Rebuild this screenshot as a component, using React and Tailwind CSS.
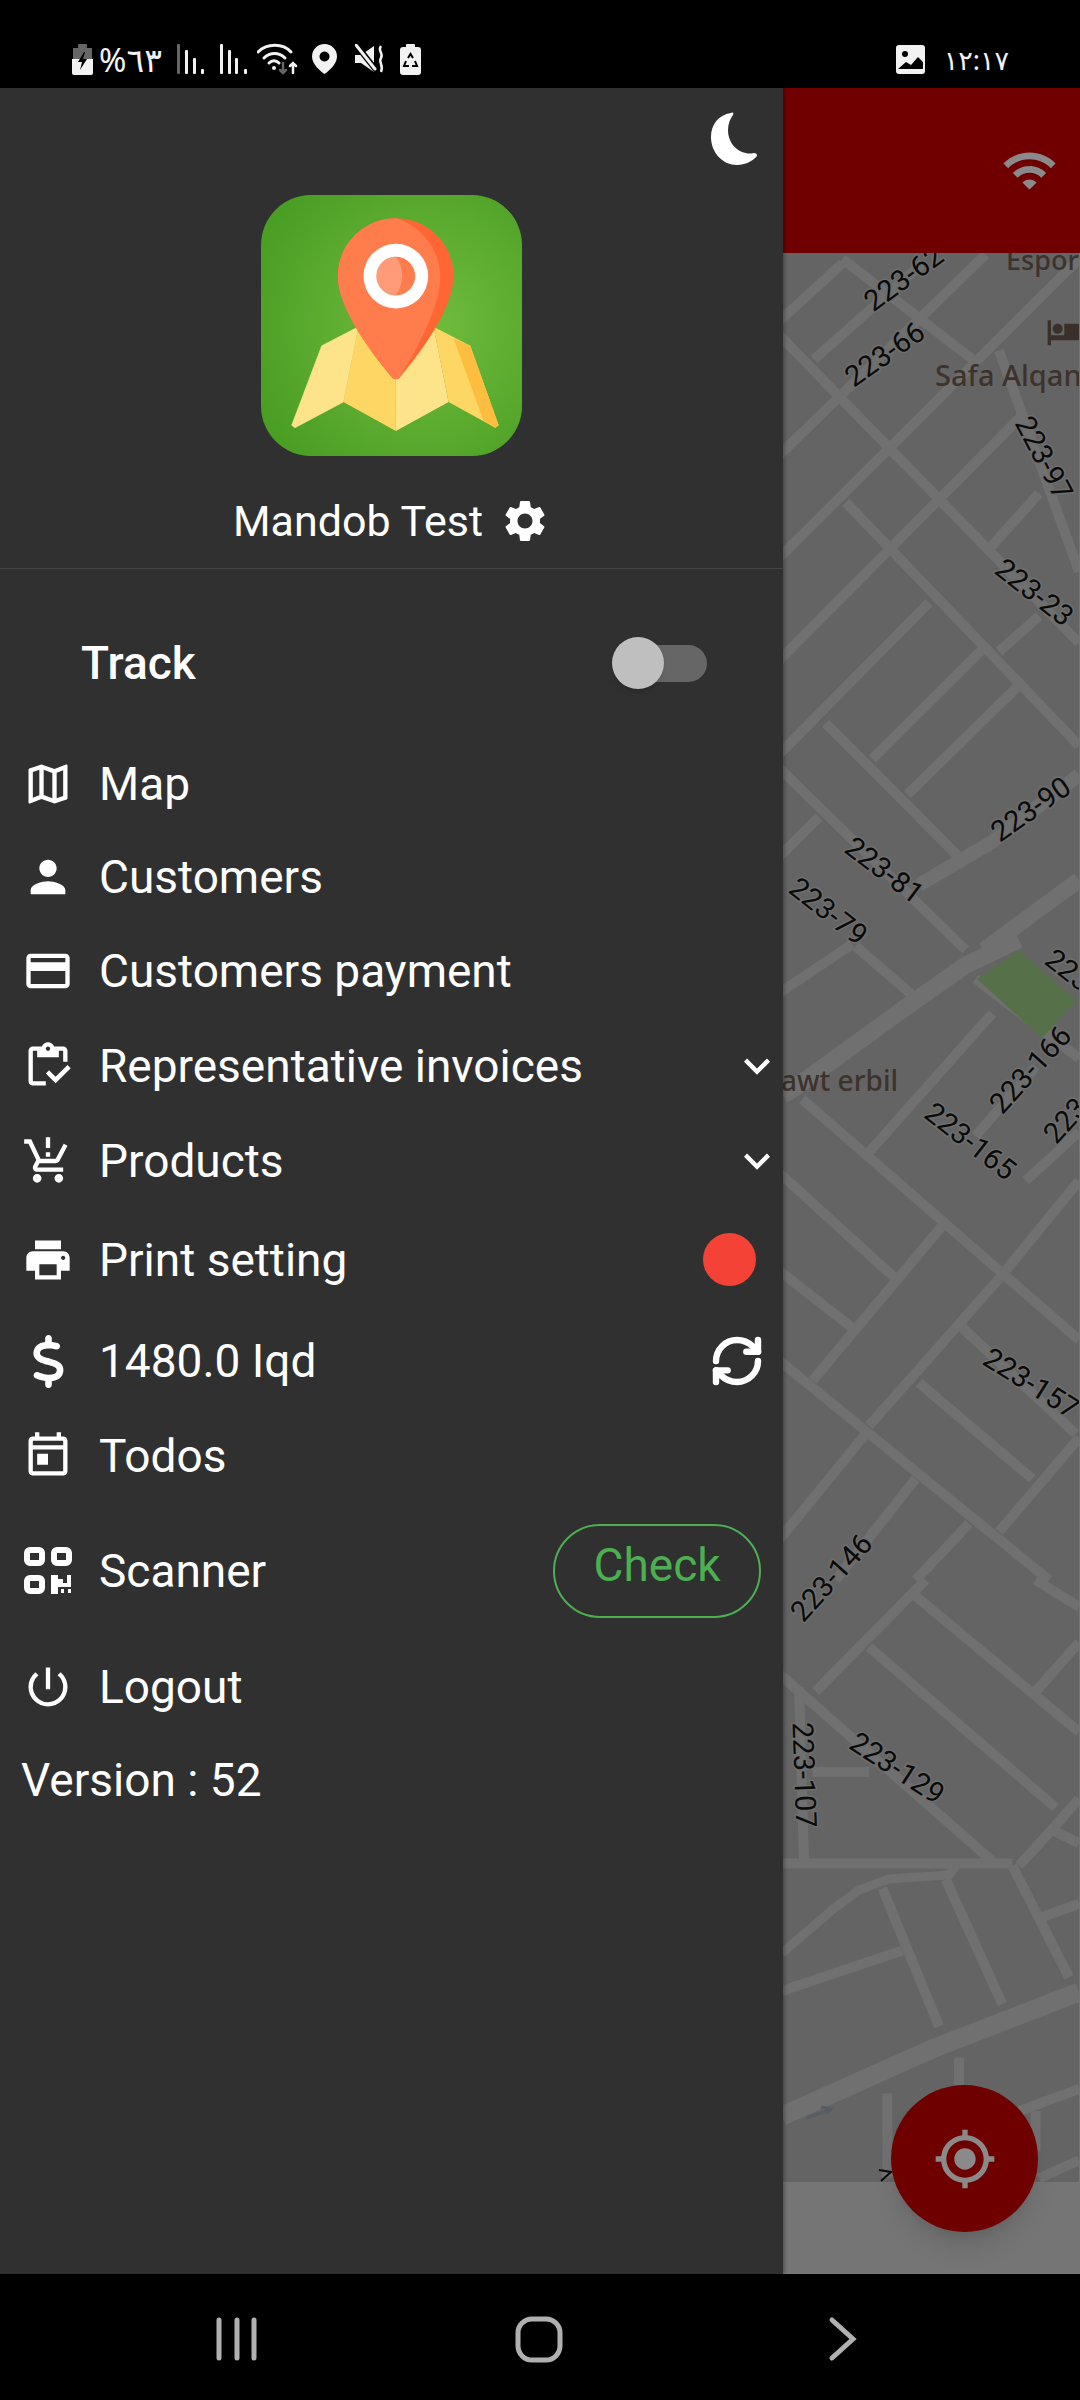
import React from "react";
import {
  MdOutlineMap,
  MdPerson,
  MdOutlineCreditCard,
  MdOutlineInventory,
  MdOutlineProductionQuantityLimits,
  MdPrint,
  MdOutlineToday,
  MdPowerSettingsNew,
  MdKeyboardArrowDown,
  MdSettings,
  MdWifi,
  MdGpsFixed,
  MdHotel,
} from "react-icons/md";
import { FaDollarSign } from "react-icons/fa6";
import { RefreshCw } from "lucide-react";

// street lines traced from the map, in crop coordinates
const top = (x, y) => [780 + x / 3, 250 + y / 2.24];
const mid = (x, y) => [780 + x / 3, 940 + y / 2.45];
const low = (x, y) => [780 + x / 3, 1580 + y / 2.24];

const topRoads = [
  [0, 160, 190, 30],
  [105, 245, 430, 30],
  [0, 460, 620, 10],
  [0, 690, 900, 20],
  [0, 920, 730, 370],
  [0, 1130, 450, 790],
  [280, 1140, 610, 895],
  [385, 1220, 720, 975],
  [630, 670, 780, 545],
  [660, 900, 780, 820],
  [0, 190, 900, 880],
  [190, 20, 590, 250],
  [200, 565, 900, 1110],
  [140, 1060, 540, 1360],
  [0, 1160, 560, 1568],
  [660, 225, 900, 720],
  [0, 1360, 120, 1270],
];
const midRoads = [
  [270, 520, 640, 180],
  [590, 480, 770, 310],
  [740, 590, 900, 470],
  [100, 1080, 490, 700],
  [270, 1190, 660, 830],
  [660, 830, 900, 590],
  [0, 1470, 260, 1210],
  [170, 1568, 410, 1320],
  [660, 1450, 900, 1220],
  [410, 1568, 570, 1430],
  [70, 390, 900, 980],
  [590, 95, 900, 290],
  [0, 570, 350, 830],
  [0, 810, 220, 950],
  [0, 1030, 810, 1568],
  [420, 1085, 760, 1320],
  [550, 950, 890, 1210],
  [230, 15, 400, 135],
  [0, 130, 220, 10],
];
const lowRoads = [
  [110, 250, 440, 0],
  [770, 250, 900, 140],
  [400, 30, 900, 340],
  [270, 150, 830, 510],
  [0, 210, 640, 630],
  [770, 0, 900, 60],
  [60, 240, 75, 630],
  [100, 430, 270, 430],
  [10, 635, 700, 635],
  [700, 640, 870, 890],
  [720, 640, 830, 550],
  [830, 550, 900, 490],
  [500, 670, 670, 950],
  [310, 690, 480, 1000],
  [10, 920, 370, 830],
  [790, 755, 900, 725],
  [820, 560, 900, 590],
  [540, 1070, 540, 1140],
  [325, 1150, 325, 1340],
  [720, 1190, 900, 1140],
  [770, 1190, 770, 1280],
  [780, 1340, 900, 1300],
];

const labels = [
  { t: "223-62", x: 906, y: 280, r: -36 },
  { t: "223-66", x: 887, y: 356, r: -35 },
  { t: "223-97", x: 1043, y: 459, r: 62 },
  { t: "223-23", x: 1034, y: 594, r: 38 },
  { t: "223-90", x: 1033, y: 811, r: -35 },
  { t: "223-81", x: 884, y: 872, r: 37 },
  { t: "223-79", x: 828, y: 913, r: 38 },
  { t: "223-166", x: 1033, y: 1071, r: -48 },
  { t: "223-165", x: 970, y: 1143, r: 38 },
  { t: "223", x: 1068, y: 1122, r: -48 },
  { t: "223", x: 1068, y: 972, r: 38 },
  { t: "223-157", x: 1031, y: 1385, r: 32 },
  { t: "223-146", x: 834, y: 1579, r: -48 },
  { t: "223-129", x: 897, y: 1770, r: 33 },
  { t: "223-107", x: 803, y: 1775, r: 88 },
];

const Road = ({ from, to, w = 10 }) => (
  <line x1={from[0]} y1={from[1]} x2={to[0]} y2={to[1]} stroke="#707070" strokeWidth={w} />
);

const MapView = () => (
  <svg viewBox="784 253 296 1929" width="296" height="1929" className="block">
    <rect x="784" y="253" width="296" height="1929" fill="#646464" />
    {topRoads.map((r, i) => (
      <Road key={"t" + i} from={top(r[0], r[1])} to={top(r[2], r[3])} />
    ))}
    {midRoads.map((r, i) => (
      <Road key={"m" + i} from={mid(r[0], r[1])} to={mid(r[2], r[3])} />
    ))}
    {lowRoads.map((r, i) => (
      <Road key={"l" + i} from={low(r[0], r[1])} to={low(r[2], r[3])} />
    ))}
    {/* wide roads */}
    <polyline points="784,1095 790,1092 910,1005 967,965 1020,940" fill="none" stroke="#707070" strokeWidth="17" />
    <polyline points="920,885 993,842 1080,775" fill="none" stroke="#707070" strokeWidth="14" />
    <polyline points="985,950 1080,880" fill="none" stroke="#707070" strokeWidth="16" />
    <polyline points="783,2116 933,2049 1080,1992" fill="none" stroke="#707070" strokeWidth="19" />
    <polyline
      points="783,1953 833,1910 860,1890 890,1879 950,1875 957,1866"
      fill="none"
      stroke="#707070"
      strokeWidth="9"
    />
    <polygon points="978,979 1020,950 1078,1001 1043,1038" fill="#56704a" />
    <path d="M807 2118 L830 2110 M822 2107 L832 2109 L827 2114" stroke="#585c64" strokeWidth="3" fill="none" />
    <path d="M880 2170 L892 2172 L882 2181" stroke="#0c0c0c" strokeWidth="2" fill="none" />
    <MdHotel x="1047" y="312" size="40" color="#3b2f2a" />

    {labels.map((l) => (
      <text
        key={l.t + l.y}
        x={l.x}
        y={l.y}
        transform={`rotate(${l.r} ${l.x} ${l.y})`}
        textAnchor="middle"
        dominantBaseline="middle"
        fontSize="29"
        fontWeight="400"
        fill="#0a0a0a"
        stroke="#6e6e6e"
        strokeWidth="3"
        paintOrder="stroke"
        className="font-['Roboto',sans-serif]"
      >
        {l.t}
      </text>
    ))}
    <text x="1007" y="270" fontSize="27" fontWeight="500" fill="#3e322c" className="font-['Noto_Sans',sans-serif]">
      Espor
    </text>
    <text x="936" y="386" fontSize="29" fontWeight="500" fill="#3e322c" className="font-['Noto_Sans',sans-serif]">
      Safa Alqan
    </text>
    <text x="782" y="1091" fontSize="28" fontWeight="500" fill="#3e322c" className="font-['Noto_Sans',sans-serif]">
      awt erbil
    </text>
  </svg>
);

const Logo = () => (
  <svg viewBox="123 75 782 782" width="261" height="261">
    <defs>
      <radialGradient id="logoBg" cx="0.62" cy="0.5" r="0.7">
        <stop offset="0" stopColor="#72bd3e" />
        <stop offset="1" stopColor="#4a9e24" />
      </radialGradient>
    </defs>
    <rect x="123" y="75" width="782" height="782" rx="150" fill="url(#logoBg)" />
    <polygon points="305,527 415,470 370,695 225,772 215,765" fill="#fde38a" stroke="#fde38a" strokeWidth="2" />
    <polygon points="415,470 527,627 527,782 370,695" fill="#fdd664" />
    <polygon points="527,627 640,470 685,695 527,782" fill="#fde38a" />
    <polygon points="640,470 750,527 835,765 825,772 685,695" fill="#fdd664" />
    <polygon points="700,505 750,527 835,765 825,772 790,752" fill="#fdbe40" />
    <path
      d="M527 145 C622 145 700 222 700 318 C700 420 590 560 540 620 C532 629 522 629 514 620 C464 560 353 420 353 318 C353 222 432 145 527 145 Z"
      fill="#ff6634"
    />
    <path
      d="M527 145 C600 165 660 240 660 318 C660 420 580 550 540 620 C532 629 522 629 514 620 C464 560 353 420 353 318 C353 222 432 145 527 145 Z"
      fill="#ff7d4d"
    />
    <circle cx="527" cy="318" r="97" fill="#fff" />
    <circle cx="527" cy="318" r="58" fill="#ff7d4d" />
    <path d="M527 260 A58 58 0 0 0 527 376 C552 340 552 295 527 260 Z" fill="#ff9b78" />
  </svg>
);

const Moon = () => (
  <svg width="48" height="56" viewBox="0 0 48 56">
    <path
      d="M21 3 C8 5 1 15 1 27 C1 43 13 55 27 55 C35 55 43 51 47 46 C47 44 46 43 44 43 C32 46 18 36 18 20 C18 14 20 9 23 5 C24 3 23 2 21 3 Z"
      fill="#fff"
    />
  </svg>
);

// four rounded squares, the last one broken up like a qr corner
const ScanIcon = () => (
  <svg width="52" height="52" viewBox="0 0 52 52" fill="none" stroke="#fff" strokeWidth="6">
    <rect x="5" y="5" width="15" height="13" rx="3" />
    <rect x="32" y="5" width="15" height="13" rx="3" />
    <rect x="5" y="33" width="15" height="13" rx="3" />
    <path
      d="M29 30 H36 V34 H41 V38 H45 V30 H49 V42 H36 V49 H29 Z M39 44 H42 V48 H39 Z M46 44 H49 V48 H46 Z"
      fill="#fff"
      stroke="none"
    />
  </svg>
);

const DollarIcon = () => <FaDollarSign size={53} color="#fff" />;

const StatusIcons = () => (
  <div className="flex items-center">
    {/* battery */}
    <svg width="21" height="31" viewBox="0 0 21 31" className="ml-[72px]">
      <rect x="6" y="0" width="9" height="4" rx="1" fill="#666" />
      <path d="M1 4 H20 V15 H1 Z" fill="#666" />
      <path d="M0 15 H21 V29 a2 2 0 0 1 -2 2 H2 a2 2 0 0 1 -2 -2 Z" fill="#f2f2f2" />
      <path d="M12 8 L6 18 H10 L8 26 L15 15 H11 L13 8 Z" fill="#000" />
    </svg>
    <span className="ml-[6px] font-['Noto_Sans','DejaVu_Sans',sans-serif] text-[33px] leading-none text-[#f2f2f2]">
      %٦٣
    </span>
    {/* signal */}
    <svg width="30" height="30" viewBox="0 0 30 30" className="ml-[15px]">
      <rect x="0" y="0" width="3" height="30" rx="1" fill="#666" />
      <rect x="8" y="6" width="3" height="24" rx="1" fill="#f2f2f2" />
      <rect x="16" y="14" width="3" height="16" rx="1" fill="#f2f2f2" />
      <rect x="24" y="25" width="3" height="5" rx="1" fill="#f2f2f2" />
    </svg>
    <svg width="30" height="30" viewBox="0 0 30 30" className="ml-[13px]">
      <rect x="0" y="0" width="3" height="30" rx="1" fill="#f2f2f2" />
      <rect x="8" y="6" width="3" height="24" rx="1" fill="#f2f2f2" />
      <rect x="15" y="14" width="3" height="16" rx="1" fill="#f2f2f2" />
      <rect x="24" y="25" width="3" height="5" rx="1" fill="#f2f2f2" />
    </svg>
    {/* wifi with data arrows */}
    <svg width="41" height="32" viewBox="0 0 41 32" className="ml-[7px]" fill="none" strokeLinecap="round">
      <path d="M1 9 C10 0 26 0 34 9" stroke="#f2f2f2" strokeWidth="3" />
      <path d="M7 15 C13 9 22 9 28 15" stroke="#f2f2f2" strokeWidth="3" />
      <path d="M12 20 C15 17 19 17 22 20" stroke="#f2f2f2" strokeWidth="3" />
      <circle cx="17" cy="25" r="2" fill="#f2f2f2" />
      <path d="M26 20 V30 M23 27 L26 30 L29 27" stroke="#666" strokeWidth="2.5" />
      <path d="M36 30 V20 M33 23 L36 20 L39 23" stroke="#f2f2f2" strokeWidth="2.5" />
    </svg>
    {/* location */}
    <svg width="25" height="30" viewBox="0 0 25 30" className="ml-[14px]">
      <path
        fillRule="evenodd"
        d="M12.5 0 C19.5 0 25 5.5 25 12.5 C25 20 17 27 12.5 30 C8 27 0 20 0 12.5 C0 5.5 5.5 0 12.5 0 Z M12.5 7.5 a5 5 0 1 0 0.01 0 Z"
        fill="#f2f2f2"
      />
    </svg>
    {/* muted */}
    <svg width="29" height="30" viewBox="0 0 29 30" className="ml-[18px]" fill="none">
      <path d="M0 11 H6 L19 2 V28 L6 19 H0 Z" fill="#f2f2f2" />
      <path d="M2 2 L21 26" stroke="#000" strokeWidth="6" />
      <path d="M1 1 L20 25" stroke="#f2f2f2" strokeWidth="3" strokeLinecap="round" />
      <path d="M26 2 C22 7 29 9 26 14 C23 18 29 21 26 28" stroke="#f2f2f2" strokeWidth="2.5" />
    </svg>
    {/* battery saver */}
    <svg width="21" height="31" viewBox="0 0 21 31" className="ml-[16px]">
      <rect x="6" y="0" width="9" height="4" rx="1" fill="#f2f2f2" />
      <rect x="0" y="3" width="21" height="28" rx="3" fill="#f2f2f2" />
      <path
        d="M8 14 L10.5 10 L13 14 M15 17 L17 22 H12 M9 22 H4 L6 17"
        stroke="#000"
        strokeWidth="2"
        fill="none"
      />
    </svg>
  </div>
);

const MenuRow = ({ icon: Icon, label, height, right }) => (
  <div className={`flex items-center ${height}`}>
    <div className="flex w-[99px] shrink-0 justify-center pr-[3px]">
      <Icon size={52} color="#fff" />
    </div>
    <span className="text-[46px] leading-none text-white">{label}</span>
    <div className="ml-auto flex items-center">{right}</div>
  </div>
);

const Chevron = () => <MdKeyboardArrowDown size={52} color="#fff" />;

const App = () => {
  return (
    <div className="flex h-[2400px] w-[1080px] flex-col overflow-hidden bg-black font-['Roboto',sans-serif]">
      {/* status bar */}
      <div className="flex h-[88px] shrink-0 items-center justify-between pt-[30px]">
        <StatusIcons />
        <div className="flex items-center pr-[71px]">
          <svg width="29" height="29" viewBox="0 0 29 29">
            <rect width="29" height="29" rx="3" fill="#f2f2f2" />
            <circle cx="9" cy="9" r="3" fill="#000" />
            <path d="M2 24 L10 17 L15 20 L22 12 L27 17 V24 Z" fill="#000" />
          </svg>
          <span className="ml-[19px] font-['Noto_Sans','DejaVu_Sans',sans-serif] text-[27px] leading-none text-[#f2f2f2]">
            ١٢:١٧
          </span>
        </div>
      </div>

      <div className="flex min-h-0 flex-1">
        {/* drawer */}
        <div className="relative z-10 flex w-[783px] shrink-0 flex-col bg-[#303030] shadow-[2px_0_3px_rgba(0,0,0,0.25)]">
          <div className="flex h-[481px] shrink-0 flex-col items-center border-b border-[#454545]">
            <div className="flex w-full justify-end pr-[25px] pt-[22px]">
              <Moon />
            </div>
            <div className="mt-[29px]">
              <Logo />
            </div>
            <div className="mt-[40px] flex items-center">
              <span className="text-[43px] leading-[50px] text-white">Mandob Test</span>
              <MdSettings size={50} color="#fff" className="ml-[17px]" />
            </div>
          </div>

          <div className="mt-[20px] flex h-[148px] shrink-0 items-center pl-[81px] pr-[76px]">
            <span className="text-[46px] font-medium leading-none text-white">Track</span>
            <div className="relative ml-auto h-[37px] w-[88px] rounded-full bg-[#666666]">
              <div className="absolute left-[-7px] top-[-8px] h-[52px] w-[52px] rounded-full bg-[#bfbfbf] shadow-md" />
            </div>
          </div>

          <MenuRow icon={MdOutlineMap} label="Map" height="h-[93px]" />
          <MenuRow icon={MdPerson} label="Customers" height="h-[94px]" />
          <MenuRow icon={MdOutlineCreditCard} label="Customers payment" height="h-[94px]" />
          <MenuRow icon={MdOutlineInventory} label="Representative invoices" height="h-[95px]" right={<Chevron />} />
          <MenuRow icon={MdOutlineProductionQuantityLimits} label="Products" height="h-[95px]" right={<Chevron />} />
          <MenuRow
            icon={MdPrint}
            label="Print setting"
            height="h-[103px]"
            right={<div className="mr-[27px] h-[53px] w-[53px] rounded-full bg-[#f44336]" />}
          />
          <MenuRow
            icon={DollarIcon}
            label="1480.0 Iqd"
            height="h-[100px]"
            right={<RefreshCw size={56} color="#fff" strokeWidth={2.75} className="mr-[18px]" />}
          />
          <MenuRow icon={MdOutlineToday} label="Todos" height="h-[90px]" />
          <MenuRow
            icon={ScanIcon}
            label="Scanner"
            height="h-[140px]"
            right={
              <button className="mr-[22px] flex h-[94px] w-[208px] items-center justify-center rounded-[47px] border-2 border-[#4caf50] pb-[12px] text-[46px] leading-none text-[#4caf50]">
                Check
              </button>
            }
          />
          <MenuRow icon={MdPowerSettingsNew} label="Logout" height="h-[92px]" />
          <div className="flex h-[94px] items-center pl-[21px] text-[46px] leading-none text-white">Version : 52</div>
        </div>

        {/* map side */}
        <div className="relative flex min-w-0 flex-1 flex-col bg-[#757575]">
          <div className="flex h-[165px] shrink-0 items-center justify-end bg-[#700000] pr-[22px]">
            <MdWifi size={57} color="#8a8a8a" />
          </div>
          <MapView />
          <div className="absolute bottom-[42px] left-[108px] flex h-[147px] w-[147px] items-center justify-center rounded-full bg-[#6f0000] shadow-xl">
            <MdGpsFixed size={64} color="#8a8a8a" />
          </div>
        </div>
      </div>

      {/* navigation bar */}
      <div className="flex h-[126px] shrink-0 items-center bg-black">
        <svg width="1080" height="126" viewBox="0 2274 1080 126" fill="none" stroke="#b0b0b0" strokeLinecap="round">
          <path d="M219 2320 V2358 M237 2320 V2358 M254 2320 V2358" strokeWidth="5" />
          <rect x="518" y="2319" width="42" height="41" rx="14" strokeWidth="5" />
          <path d="M832 2320 L853 2339 L832 2358" strokeWidth="5" />
        </svg>
      </div>
    </div>
  );
};

export default App;
